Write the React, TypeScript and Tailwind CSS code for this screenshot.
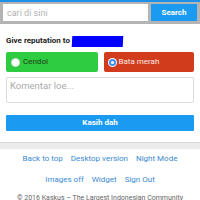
export default function App() {
  return (
    <div className="w-[200px] bg-white font-['Roboto',sans-serif]">
      <div className="h-[2px] bg-[#1e90e8]" />
      <form className="flex gap-[3px] bg-[#b4b4b4] px-[3px] pb-[3px] pt-[2px]">
        <input
          placeholder="cari di sini"
          className="h-[17px] min-w-0 flex-1 bg-white px-[4px] text-[9px] text-[#333] placeholder:text-[#b0b0b0] outline-none"
        />
        <button
          type="button"
          className="h-[17px] w-[46px] bg-[#1a9af0] text-[8px] font-bold text-white"
        >
          Search
        </button>
      </form>

      <div className="px-[6px] pt-[11px]">
        <div className="flex h-[12px] items-center text-[8px] font-bold leading-[12px] text-[#222]">
          Give reputation to
          <span className="ml-[2px] inline-block h-[11px] w-[51px] -skew-x-3 bg-[#0000ff]" />
        </div>

        <div className="mt-[5px] flex gap-[6px]">
          <label className="flex h-[20px] flex-1 items-center gap-[3px] rounded-[2px] bg-[#2ecc40] pl-[5px] text-[8px] text-[#1d3a16]">
            <span className="size-[9px] rounded-full border border-[#ddd] bg-white" />
            Cendol
          </label>
          <label className="flex h-[20px] flex-1 items-center gap-[2px] rounded-[2px] bg-[#d13c1c] pl-[4px] text-[8px] text-[#fbe9e4]">
            <span className="flex size-[9px] items-center justify-center rounded-full bg-white">
              <span className="flex size-[7px] items-center justify-center rounded-full bg-[#3f8ef0]">
                <span className="size-[3px] rounded-full bg-white" />
              </span>
            </span>
            Bata merah
          </label>
        </div>

        <textarea
          placeholder="Komentar loe..."
          className="mt-[5px] block h-[26px] w-full resize-none rounded-[2px] border border-[#dcdcdc] px-[3px] py-[2px] text-[9.5px] leading-[12px] placeholder:text-[#aaa] outline-none"
        />

        <button
          type="button"
          className="mt-[12px] block h-[16px] w-full rounded-[1px] bg-[#1a9af0] text-[8px] font-bold text-white"
        >
          Kasih dah
        </button>
      </div>

      <div className="mt-[11px] h-[7px] border-t border-[#d6d6d6] bg-[#ececec]" />

      <nav className="text-[8px] leading-[12px] text-[#3a8ad3]">
        <div className="mt-[4px] flex justify-center gap-[8px]">
          <a>Back to top</a>
          <a>Desktop version</a>
          <a>Night Mode</a>
        </div>
        <div className="mt-[9px] flex justify-center gap-[8px]">
          <a>Images off</a>
          <a>Widget</a>
          <a>Sign Out</a>
        </div>
      </nav>

      <p className="mt-[7px] text-center text-[7px] leading-[10px] text-[#666]">
        © 2016 Kaskus – The Largest Indonesian Community
      </p>
    </div>
  );
}
